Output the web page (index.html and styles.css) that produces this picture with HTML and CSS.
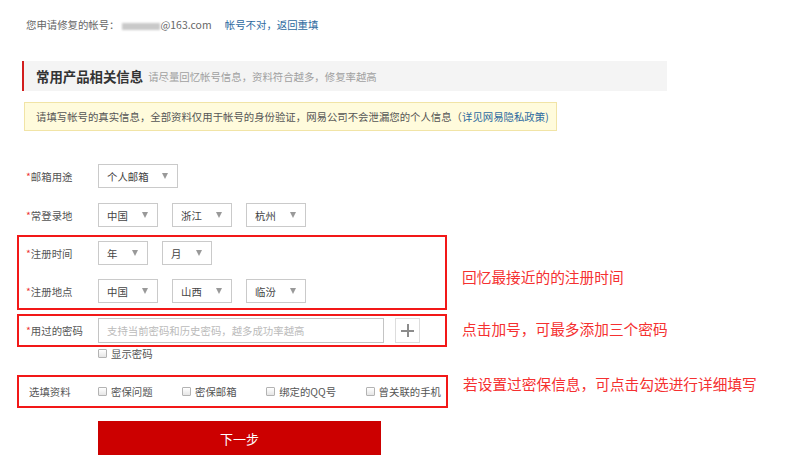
FILE: index.html
```html
<!doctype html>
<html lang="zh-CN">
<head>
	<meta charset="UTF-8">
	<title>帐号修复</title>
	<link rel="stylesheet" href="styles.css">
</head>
<body>
	<div class="page">
		<p class="account">
			您申请修复的帐号：<span class="mask"></span>@163.com
			<a href="#" class="back">帐号不对，返回重填</a>
		</p>

		<div class="section-head">
			<h2>常用产品相关信息</h2>
			<span class="sub">请尽量回忆帐号信息，资料符合越多，修复率越高</span>
		</div>

		<div class="notice">
			请填写帐号的真实信息，全部资料仅用于帐号的身份验证，网易公司不会泄漏您的个人信息（<a href="#">详见网易隐私政策)</a>
		</div>

		<div class="form">
			<div class="row">
				<label class="label"><i>*</i>邮箱用途</label>
				<div class="sel w80">个人邮箱<b></b></div>
			</div>
			<div class="row">
				<label class="label"><i>*</i>常登录地</label>
				<div class="sel w60">中国<b></b></div>
				<div class="sel w60">浙江<b></b></div>
				<div class="sel w60">杭州<b></b></div>
			</div>

			<div class="group">
				<div class="box box-time">
					<div class="row">
						<label class="label"><i>*</i>注册时间</label>
						<div class="sel w49">年<b></b></div>
						<div class="sel w49">月<b></b></div>
					</div>
					<div class="row">
						<label class="label"><i>*</i>注册地点</label>
						<div class="sel w60">中国<b></b></div>
						<div class="sel w60">山西<b></b></div>
						<div class="sel w60">临汾<b></b></div>
					</div>
				</div>
				<p class="note">回忆最接近的的注册时间</p>
			</div>

			<div class="group">
				<div class="box box-pwd">
					<div class="row">
						<label class="label"><i>*</i>用过的密码</label>
						<input type="text" class="pwd" placeholder="支持当前密码和历史密码，越多成功率越高">
						<span class="add"></span>
					</div>
				</div>
				<p class="note">点击加号，可最多添加三个密码</p>
			</div>
			<label class="show-pwd"><input type="checkbox" class="cb">显示密码</label>

			<div class="group">
				<div class="box box-opt">
					<div class="row">
						<label class="label label-opt">选填资料</label>
						<div class="checks">
							<label><input type="checkbox" class="cb">密保问题</label>
							<label><input type="checkbox" class="cb">密保邮箱</label>
							<label><input type="checkbox" class="cb">绑定的QQ号</label>
							<label><input type="checkbox" class="cb">曾关联的手机</label>
						</div>
					</div>
				</div>
				<p class="note">若设置过密保信息，可点击勾选进行详细填写</p>
			</div>

			<button class="next">下一步</button>
		</div>
	</div>
</body>
</html>
```

FILE: styles.css
```css
* {
	margin: 0;
	padding: 0;
	box-sizing: border-box;
}
body {
	font-family: "Noto Sans CJK SC", "Liberation Sans", sans-serif;
	font-size: 10.4px;
	color: #666;
	background: #fff;
}
a {
	color: #2d6aa0;
	text-decoration: none;
}

.page {
	padding-top: 18px;
}

.account {
	padding-left: 26px;
	line-height: 14px;
	color: #666;
}
.account .mask {
	display: inline-block;
	width: 38px;
	height: 7px;
	margin: 0 1px 0 2px;
	vertical-align: middle;
	background: #c9c9c9;
	filter: blur(1.2px);
}
.account .back {
	margin-left: 11px;
}

.section-head {
	display: flex;
	align-items: center;
	margin: 29px 0 0 22px;
	width: 645px;
	height: 30px;
	padding-left: 12px;
	background: #f4f4f4;
	border-left: 2px solid #d21e1e;
}
.section-head h2 {
	font-size: 13.4px;
	font-weight: bold;
	color: #333;
}
.section-head .sub {
	margin-left: 5px;
	font-size: 10.4px;
	color: #a0a0a0;
}

.notice {
	margin: 11px 0 0 24px;
	width: 533px;
	height: 29px;
	line-height: 27px;
	padding-left: 11px;
	color: #555;
	background: #fffbdc;
	border: 1px solid #f1e4a6;
}

.form {
	margin-top: 33px;
}
.row {
	display: flex;
	align-items: center;
	height: 24px;
	margin-bottom: 15px;
	padding-left: 26px;
}
.label {
	width: 72px;
	color: #555;
}
.label i {
	font-style: normal;
	color: #e33;
}
.label-opt {
	padding-left: 3px;
}

.sel {
	display: flex;
	align-items: center;
	justify-content: space-between;
	height: 24px;
	padding: 0 9px 0 8px;
	margin-right: 14px;
	color: #444;
	border: 1px solid #cacaca;
}
.sel b {
	width: 0;
	height: 0;
	border-left: 3.5px solid transparent;
	border-right: 3.5px solid transparent;
	border-top: 6px solid #999;
}
.w80 { width: 80px; }
.w60 { width: 60px; }
.w49 { width: 50px; }

.group {
	display: flex;
	align-items: center;
}
.box {
	margin-left: 17px;
	width: 430px;
	border: 2px solid #f21818;
}
.box .row {
	padding-left: 7px;
}
.note {
	margin-left: 15px;
	font-size: 14.7px;
	color: #f53030;
}

.box-time {
	margin-top: -7px;
	padding: 4px 0 5px;
}
.box-time .row {
	margin-bottom: 14px;
}
.box-time .row:last-child {
	margin-bottom: 0;
}

.box-pwd {
	margin-top: 4px;
	padding: 2px 0;
}
.box-pwd .row {
	height: 25px;
	margin-bottom: 0;
}
.pwd {
	width: 286px;
	height: 25px;
	padding-left: 8px;
	font-family: "Noto Sans CJK SC", sans-serif;
	font-size: 10.4px;
	color: #444;
	border: 1px solid #c4c4c4;
	outline: none;
}
.pwd::placeholder {
	color: #bbb;
}
.add {
	position: relative;
	width: 25px;
	height: 25px;
	margin-left: 11px;
	border: 1px solid #ddd;
}
.add::before,
.add::after {
	content: "";
	position: absolute;
	background: #8c8c8c;
}
.add::before {
	left: 5px;
	right: 5px;
	top: 10.5px;
	height: 2px;
}
.add::after {
	top: 5px;
	bottom: 5px;
	left: 10.5px;
	width: 2px;
}

.cb {
	appearance: none;
	-webkit-appearance: none;
	width: 9px;
	height: 9px;
	margin-right: 4px;
	border: 1px solid #b3b3b3;
	border-radius: 1px;
	background: linear-gradient(#fff, #e6e6e6);
}
.show-pwd {
	display: flex;
	align-items: center;
	margin: 0 0 0 98px;
	height: 12px;
	color: #555;
}

.box-opt {
	margin-top: 16px;
	width: 431px;
}
.box-opt .row {
	height: 29px;
	margin-bottom: 0;
}
.checks {
	display: flex;
	gap: 29.5px;
}
.checks label {
	display: flex;
	align-items: center;
	color: #555;
}

.next {
	display: block;
	margin: 13px 0 0 98px;
	width: 283px;
	height: 34px;
	font-family: "Noto Sans CJK SC", sans-serif;
	font-size: 13px;
	color: #fff;
	background: #cc0000;
	border: none;
}
```
